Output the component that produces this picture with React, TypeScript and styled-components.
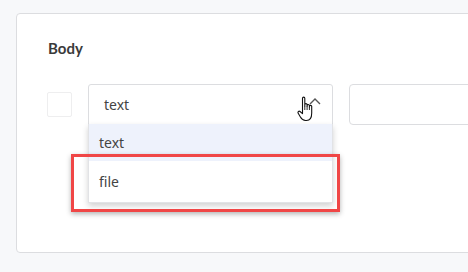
import React from "react";
import styled, { createGlobalStyle } from "styled-components";

const Global = createGlobalStyle`
  html, body { margin: 0; padding: 0; }
  body {
    background: #f7f8fa;
    width: 468px;
    height: 272px;
    overflow: hidden;
    font-family: "Noto Sans", "Open Sans", sans-serif;
  }
`;

const Page = styled.div`
  padding: 13px 0 0 16px;
  overflow: hidden;
`;

const Card = styled.section`
  margin-right: -12px;
  height: 238px;
  background: #fff;
  border: 1px solid #dcdde0;
  border-radius: 4px;
`;

const Inner = styled.div`
  padding: 24px 0 0 30px;
  display: flex;
  flex-direction: column;
  gap: 26px;
`;

const Title = styled.h3`
  margin: 0;
  font-family: "Lato", "Noto Sans", sans-serif;
  font-weight: 700;
  font-size: 15px;
  line-height: 20px;
  color: #3a3a3a;
  padding-left: 1px;
`;

const Row = styled.div`
  display: flex;
  align-items: center;
  gap: 16px;
`;

const Check = styled.div`
  width: 23px;
  height: 23px;
  border: 1px solid #eeeeef;
  border-radius: 2px;
  background: #fff;
`;

const SelectWrap = styled.div`
  position: relative;
  width: 245px;
`;

const SelectBox = styled.div`
  box-sizing: border-box;
  height: 41px;
  border: 1px solid #dcdde0;
  border-radius: 3px 3px 0 0;
  display: flex;
  align-items: center;
  padding: 0 15px;
  font-size: 14px;
  color: #444;
  position: relative;
`;

const Chevron = styled.svg`
  position: absolute;
  right: 11px;
  top: 12px;
`;

const Cursor = styled.svg`
  position: absolute;
  left: 208px;
  top: 10px;
`;

const Menu = styled.ul`
  position: absolute;
  top: 40px;
  left: 0;
  right: 0;
  margin: 0;
  padding: 0;
  list-style: none;
  background: #fff;
  border: 1px solid #e2e3e6;
  border-top: none;
  box-shadow: 0 3px 6px rgba(0, 0, 0, 0.18);
`;

const Option = styled.li<{ $active?: boolean; $h: number }>`
  height: ${(p) => p.$h}px;
  display: flex;
  align-items: center;
  padding: 0 10px;
  font-size: 14px;
  color: #444;
  background: ${(p) => (p.$active ? "#eef2fc" : "#fff")};
`;

const Highlight = styled.div`
  position: absolute;
  left: -17px;
  top: 70px;
  width: 263px;
  height: 52px;
  border: 3px solid #f04646;
  box-shadow: 0 2px 5px rgba(0, 0, 0, 0.3);
  pointer-events: none;
`;

const Input = styled.div`
  box-sizing: border-box;
  flex: 1;
  height: 41px;
  border: 1px solid #dcdde0;
  border-radius: 4px;
  background: #fff;
`;

export default function App() {
  return (
    <>
      <Global />
      <Page>
        <Card>
          <Inner>
            <Title>Body</Title>
            <Row>
              <Check />
              <SelectWrap>
                <SelectBox>
                  text
                  <Chevron width="12" height="8" viewBox="0 0 12 8">
                    <path d="M1 7 L6 2 L11 7" fill="none" stroke="#555" strokeWidth="1.4" />
                  </Chevron>
                  <Cursor width="20" height="28" viewBox="0 0 20 28">
                    <path
                      d="M5.5 15.5 V3.2 C5.5 1.8 7.8 1.8 7.8 3.2 V11 V9.6 C7.8 8.3 10.1 8.3 10.1 9.6 V11.5 V10.4 C10.1 9.1 12.4 9.1 12.4 10.4 V12 V11.3 C12.4 10 14.7 10 14.7 11.3 V18 C14.7 22 13 25.5 9.5 25.5 H8.5 C6 25.5 4.6 24 3.4 22 L1.2 18.2 C0.5 17 1.8 15.6 3 16.5 L5.5 18.6 Z"
                      fill="#fff"
                      stroke="#111"
                      strokeWidth="1.1"
                      strokeLinejoin="round"
                    />
                    <path d="M7.8 11 V15 M10.1 11.5 V15 M12.4 12 V15" stroke="#111" strokeWidth="0.9" />
                  </Cursor>
                </SelectBox>
                <Menu>
                  <Option $active $h={37}>text</Option>
                  <Option $h={41}>file</Option>
                </Menu>
                <Highlight />
              </SelectWrap>
              <Input />
            </Row>
          </Inner>
        </Card>
      </Page>
    </>
  );
}
